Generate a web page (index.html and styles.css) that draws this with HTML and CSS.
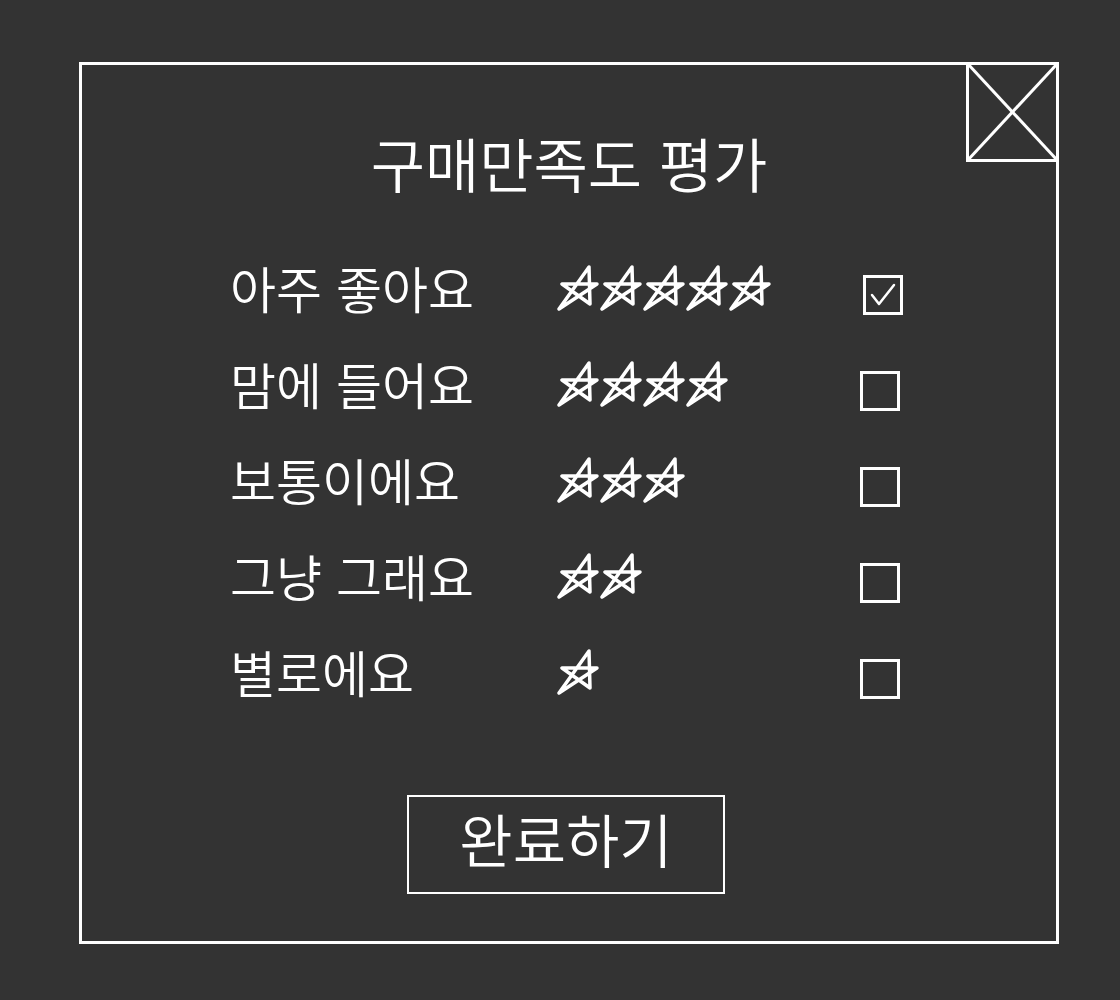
FILE: index.html
```html
<!DOCTYPE html>
<html lang="ko">
<head>
    <meta charset="UTF-8">
    <title>구매만족도 평가</title>
    <link rel="stylesheet" href="styles.css">
</head>
<body>

<div class="dialog">
    <!-- close box in the corner -->
    <svg class="close-box" viewBox="0 0 93 100" width="93" height="100">
        <rect x="1.5" y="1.5" width="90" height="97" />
        <line x1="1.5" y1="1.5" x2="91.5" y2="98.5" />
        <line x1="91.5" y1="1.5" x2="1.5" y2="98.5" />
    </svg>

    <h1 class="title">구매만족도 평가</h1>

    <div class="ratings">
        <div class="label">아주 좋아요</div>
        <div class="stars" data-count="5"></div>
        <div class="check checked">
            <svg viewBox="0 0 40 40" width="40" height="40"><path d="M9 20 L16 29 L31 10" /></svg>
        </div>

        <div class="label">맘에 들어요</div>
        <div class="stars" data-count="4"></div>
        <div class="check"></div>

        <div class="label">보통이에요</div>
        <div class="stars" data-count="3"></div>
        <div class="check"></div>

        <div class="label">그냥 그래요</div>
        <div class="stars" data-count="2"></div>
        <div class="check"></div>

        <div class="label">별로에요</div>
        <div class="stars" data-count="1"></div>
        <div class="check"></div>
    </div>

    <button class="done-btn">완료하기</button>
</div>

<script>
    // draw the hand-drawn stars for each row
    var star = '<svg viewBox="0 0 44 46" width="44" height="46">' +
        '<path d="M2 44 L32 2 L33 39 L5 19 L40 19 Z" /></svg>';
    var rows = document.querySelectorAll('.stars');
    for (var i = 0; i < rows.length; i++) {
        var n = parseInt(rows[i].getAttribute('data-count'));
        var html = '';
        for (var j = 0; j < n; j++) {
            html += star;
        }
        rows[i].innerHTML = html;
    }
</script>

</body>
</html>
```

FILE: styles.css
```css
/* Page */
body {
    margin: 0;
    background: #333333;
    color: #ffffff;
    font-family: "Noto Sans CJK KR", "Noto Sans", sans-serif;
    font-weight: 350;
}

/* Main dialog frame */
.dialog {
    position: relative;
    box-sizing: border-box;
    width: 980px;
    height: 882px;
    margin: 62px 0 0 79px;
    border: 3px solid #ffffff;
    display: flex;
    flex-direction: column;
    align-items: center;
}

/* Close box (top right) */
.close-box {
    position: absolute;
    top: -3px;
    right: -3px;
}

.close-box rect,
.close-box line {
    fill: none;
    stroke: #ffffff;
    stroke-width: 3;
}

/* Title */
.title {
    margin: 66px 0 0 0;
    font-size: 59px;
    font-weight: 350;
    line-height: 64px;
}

/* Rating rows */
.ratings {
    align-self: flex-start;
    margin: 47px 0 0 148px;
    display: grid;
    grid-template-columns: 327px 303px 40px;
    grid-auto-rows: 96px;
    align-items: center;
}

.label {
    font-size: 50px;
    line-height: 1;
    margin-top: -6px;
}

.stars {
    display: flex;
    margin-top: -4px;
}

.stars svg {
    margin-right: -1px;
}

.stars path {
    fill: none;
    stroke: #ffffff;
    stroke-width: 3.5;
    stroke-linejoin: round;
    stroke-linecap: round;
}

.check {
    box-sizing: border-box;
    width: 40px;
    height: 40px;
    border: 3px solid #ffffff;
    margin-top: 10px;
}

.check.checked {
    margin-left: 3px;
}

.check.checked svg {
    display: block;
    margin: -3px;
}

.check path {
    fill: none;
    stroke: #ffffff;
    stroke-width: 2.5;
    stroke-linecap: round;
    stroke-linejoin: round;
}

/* Done button */
.done-btn {
    margin: 73px 0 0 -6px;
    width: 318px;
    height: 99px;
    background: transparent;
    color: #ffffff;
    border: 2px solid #ffffff;
    font-family: "Noto Sans CJK KR", "Noto Sans", sans-serif;
    font-weight: 350;
    font-size: 58px;
    line-height: 1;
    padding: 0 0 14px 0;
}
```
